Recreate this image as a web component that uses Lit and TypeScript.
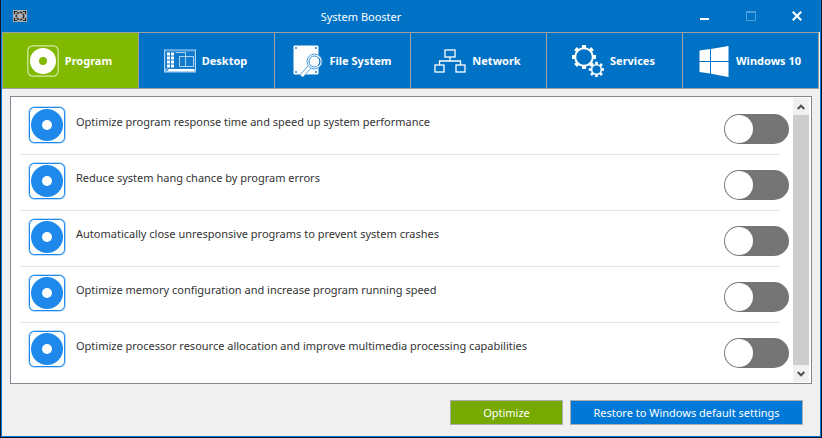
import { LitElement, html, css, svg } from "lit";
import { customElement, state } from "lit/decorators.js";

const gear = (cx: number, cy: number, r: number, teeth: number, w: number, ring: number) => svg`
  ${Array.from({ length: teeth }, (_, i) => svg`<rect x=${cx - w / 2} y=${cy - r - 2.2} width=${w} height="3"
    fill="#fff" transform=${`rotate(${(i * 360) / teeth} ${cx} ${cy})`}></rect>`)}
  <circle cx=${cx} cy=${cy} r=${r - ring / 2} fill="none" stroke="#fff" stroke-width=${ring}></circle>`;

const icons: Record<string, unknown> = {
  Program: svg`
    <rect x=".8" y=".8" width="30.4" height="30.4" rx="5" fill="none" stroke="#d6eba6" stroke-width="1.2"></rect>
    <path fill="#fff" fill-rule="evenodd" d="M16 3a13 13 0 1 0 0 26a13 13 0 1 0 0-26zM16 12a4 4 0 1 1 0 8a4 4 0 1 1 0-8z"></path>`,
  Desktop: svg`
    <rect x=".5" y="5" width="31" height="22" fill="#2d8ad4" stroke="#a9d4f5"></rect>
    <rect x="2" y="7" width="28" height="16.5" fill="#1079cb"></rect>
    <path d="M1.500 24h29v2.500h-29z" fill="#fff"></path>
    <circle cx="3" cy="25" r="1.300" fill="#1079cb" stroke="#cde6fa" stroke-width=".6"></circle>
    <path fill="#fff" d="M3 7.500h3v3H3zM7 7.500h3v3H7zM3 11.500h3v3H3zM7 11.500h3v3H7zM3 15.500h3v3H3zM7 15.500h3v3H7zM3 19.500h3v3H3zM7 19.500h3v3H7z"></path>
    <path d="M11.500 3.500h10v18h-10" transform="translate(0 0)" fill="none" stroke="none"></path>
    <path d="M11.500 7.500h10v14" fill="none" stroke="#a9d4f5"></path>
    <path d="M15.500 11.500h14v10h-14z" fill="none" stroke="#a9d4f5"></path>`,
  "File System": svg`
    <rect x="1.500" y=".5" width="25" height="29" rx="1" fill="#fff"></rect>
    <g fill="#2d8ad4"><circle cx="4" cy="3" r="1.100"></circle><circle cx="24" cy="3" r="1.100"></circle><circle cx="4" cy="27" r="1.100"></circle><circle cx="24" cy="27" r="1.100"></circle></g>
    <path d="M17.500 22l-8 9" stroke="#5aa6e2" stroke-width="4.400"></path>
    <path d="M18 21.500l-8.500 9.500" stroke="#fff" stroke-width="3"></path>
    <circle cx="22.500" cy="16.500" r="7.500" fill="#fff" stroke="#4a9bdc"></circle>
    <circle cx="22.500" cy="16.500" r="5.500" fill="#fff" stroke="#2d8ad4"></circle>
    <path d="M26.500 12.800a5.500 5.500 0 0 1 0 7.400" fill="none" stroke="#0072c6"></path>`,
  Network: svg`
    <g fill="none" stroke="#fff" stroke-width="1.300">
      <rect x="11" y="5" width="10" height="7"></rect><rect x="1" y="20" width="9" height="7"></rect><rect x="22" y="20" width="9" height="7"></rect>
      <path d="M16 12v4M5.500 20v-4h21v4"></path>
    </g>`,
  Services: svg`${gear(12, 12, 9.8, 8, 4, 2)}${gear(24.500, 24.500, 5.6, 8, 2.6, 1.500)}`,
  "Windows 10": svg`<path fill="#fff" d="M1.500 5.500L12 4v12H1.500zM13 4L30.500 1v15H13zM1.500 17H12v11.500L1.500 27zM13 17h17.500v15L13 28.800z"></path>`,
};

const options = [
  "Optimize program response time and speed up system performance",
  "Reduce system hang chance by program errors",
  "Automatically close unresponsive programs to prevent system crashes",
  "Optimize memory configuration and increase program running speed",
  "Optimize processor resource allocation and improve multimedia processing capabilities",
];

@customElement("app-root")
export class AppRoot extends LitElement {
  static styles = css`
    :host {
      display: flex;
      box-sizing: border-box;
      min-height: 100vh;
      padding: 0 1px 1px;
      background: #101722;
      font: 11px/16px "Noto Sans", "Open Sans", sans-serif;
      color: #333;
    }
    * { box-sizing: border-box; }
    button { font: inherit; margin: 0; padding: 0; }
    svg { display: block; flex: none; }
    .window {
      flex: 1;
      min-width: 0;
      display: flex;
      flex-direction: column;
      background: #f0f0f0;
      border: 1px solid #0078d7;
      border-top: 0;
    }
    .title {
      display: flex;
      align-items: center;
      height: 32px;
      padding-left: 10px;
      background: #0072c6;
      color: #fff;
    }
    .title h1 { flex: 1; font: inherit; margin: 0; padding: 2px 0 0 12px; text-align: center; }
    .controls { display: flex; justify-content: flex-end; }
    .controls button {
      display: grid;
      place-items: center;
      width: 46px;
      height: 32px;
      border: 0;
      background: none;
      color: #fff;
    }
    .tabs {
      display: flex;
      margin-right: 1px;
      border: solid #a0a0a0;
      border-width: 1px 1px 1px 0;
    }
    .tab {
      flex: 1 1 0;
      display: flex;
      align-items: center;
      justify-content: center;
      gap: 6px;
      height: 55px;
      padding-right: 2px;
      border: 0;
      border-left: 1px solid #a0a0a0;
      background: #0072c6;
      color: #fff;
      font-weight: 700;
      white-space: nowrap;
    }
    .tab.active { background: #80b900; }
    .panel {
      display: flex;
      flex: 1;
      margin: 7px 8px 0;
      padding: 1px;
      background: #fff;
      border: 1px solid #828790;
    }
    ul { flex: 1; min-width: 0; margin: 0; padding: 0 0 0 8px; list-style: none; }
    li { position: relative; display: flex; height: 56px; padding: 8px 4px 0 8px; }
    li:not(:last-child)::after {
      content: "";
      position: absolute;
      left: 0;
      right: 13px;
      bottom: -1px;
      height: 1px;
      background: #e3e3e3;
    }
    label { flex: 1; padding: 8px 0 0 10px; }
    .switch {
      appearance: none;
      flex: none;
      align-self: flex-start;
      width: 65px;
      height: 30px;
      margin: 8px 0 0;
      padding: 1px;
      border-radius: 15px;
      background: #757575;
    }
    .switch::before {
      content: "";
      display: block;
      width: 28px;
      height: 28px;
      border-radius: 50%;
      background: #fff;
    }
    .switch:checked { background: #76aa00; }
    .switch:checked::before { margin-left: auto; }
    .scroll { display: flex; flex-direction: column; width: 17px; background: #cdcdcd; border-right: 1px solid #fff; }
    .scroll button { display: grid; place-items: center; height: 17px; border: 0; background: #f0f0f0; }
    .thumb { flex: 1; }
    footer { display: flex; justify-content: flex-end; gap: 7px; padding: 16px 17px 11px; }
    .action { height: 25px; padding: 0 16px; border: 1px solid #adadad; background: #0078d7; color: #fff; white-space: nowrap; }
    .primary { min-width: 113px; background: #76aa00; }
    .restore { min-width: 233px; }
  `;

  @state() private active = "Program";

  render() {
    return html`
      <main class="window">
        <header class="title">
          <svg width="16" height="16" viewBox="0 0 16 16" aria-hidden="true">
            <rect x="1" y="2" width="14" height="12" fill="#aaa"></rect>
            <path d="M2.500 6V3.500H5M11 3.500h2.500V6M2.500 10v2.500H5M11 12.500h2.500V10" fill="none" stroke="#222" stroke-width="1.200"></path>
            <circle cx="8" cy="8" r="3.800" fill="#999" stroke="#222" stroke-width="1.200" stroke-dasharray="2.500 1"></circle>
            <circle cx="8" cy="8" r="2.200" fill="#b4b4b4"></circle>
          </svg>
          <h1>System Booster</h1>
          <div class="controls">
            <button aria-label="Minimize"><svg width="10" height="10" viewBox="0 0 10 10"><path d="M0 8h9" stroke="#fff" stroke-width="2"></path></svg></button>
            <button aria-label="Maximize" disabled><svg width="10" height="10" viewBox="0 0 10 10"><path d="M.5.5h9v9h-9zM0 1.500h10" fill="none" stroke="#4d9fdc"></path></svg></button>
            <button aria-label="Close"><svg width="10" height="10" viewBox="0 0 10 10"><path d="M.7.7l8.600 8.600M9.300.7L.7 9.300" stroke="#fff" stroke-width="2"></path></svg></button>
          </div>
        </header>
        <nav class="tabs" role="tablist">
          ${Object.keys(icons).map((name) => html`
            <button class="tab ${name === this.active ? "active" : ""}" role="tab"
              aria-selected=${name === this.active} @click=${() => (this.active = name)}>
              <svg width="32" height="32" viewBox="0 0 32 32" aria-hidden="true">${icons[name]}</svg>
              <span>${name}</span>
            </button>`)}
        </nav>
        <section class="panel">
          <ul>
            ${options.map((text, i) => html`
              <li>
                <svg width="38" height="38" viewBox="0 0 38 38" aria-hidden="true">
                  <rect x="1" y="1" width="36" height="36" rx="5" fill="#fff" stroke="#a8d2f8" stroke-width="1.500"></rect>
                  <rect x="1.500" y="1.500" width="35" height="35" rx="5" fill="none" stroke="#1e88eb"></rect>
                  <circle cx="19" cy="19" r="16" fill="#1e88eb"></circle>
                  <circle cx="19" cy="19" r="5" fill="#fff"></circle>
                </svg>
                <label for="option-${i}">${text}</label>
                <input class="switch" type="checkbox" role="switch" id="option-${i}">
              </li>`)}
          </ul>
          <div class="scroll">
            <button aria-label="Scroll up"><svg width="8" height="6" viewBox="0 0 8 6"><path d="M.7 5L4 1.700 7.300 5" fill="none" stroke="#505050" stroke-width="2"></path></svg></button>
            <div class="thumb"></div>
            <button aria-label="Scroll down"><svg width="8" height="6" viewBox="0 0 8 6"><path d="M.7 1L4 4.300 7.300 1" fill="none" stroke="#505050" stroke-width="2"></path></svg></button>
          </div>
        </section>
        <footer>
          <button class="action primary">Optimize</button>
          <button class="action restore">Restore to Windows default settings</button>
        </footer>
      </main>`;
  }
}
